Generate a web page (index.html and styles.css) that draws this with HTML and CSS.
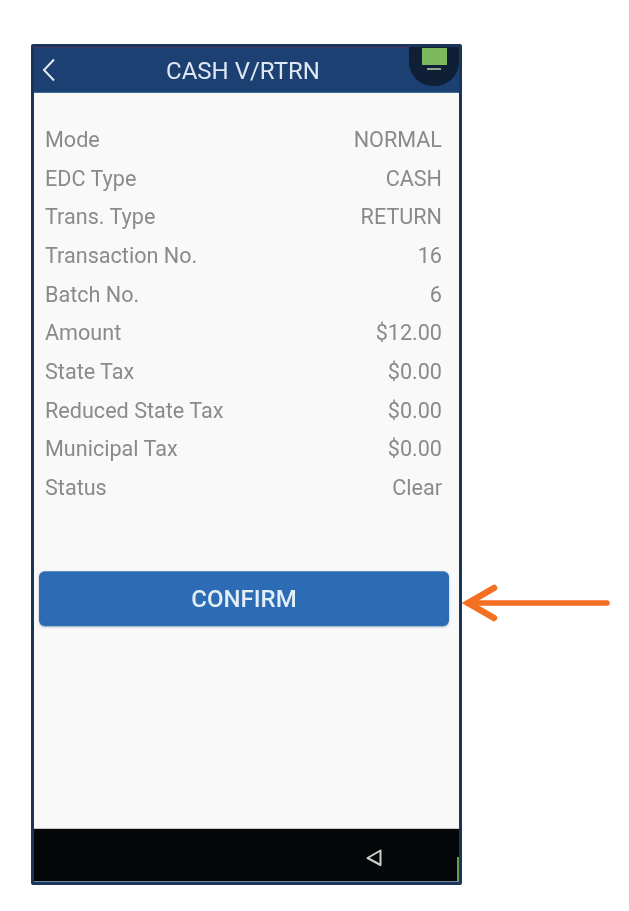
FILE: index.html
```html
<!DOCTYPE html>
<html lang="en">
<head>
    <meta charset="UTF-8">
    <meta name="viewport" content="width=device-width, initial-scale=1.0">
    <title>Cash V/Rtrn</title>
    <link rel="stylesheet" href="styles.css">
</head>
<body>
    <div class="phone">
        <!-- Header -->
        <div class="header">
            <svg class="back" width="16" height="26" viewBox="0 0 16 26">
                <path d="M13 2.5 L3 13 L13 23.5" fill="none" stroke="#e4ebf3" stroke-width="2"/>
            </svg>
            <span class="title">CASH V/RTRN</span>
            <div class="status-badge">
                <div class="status-light"></div>
                <div class="status-dash"></div>
            </div>
        </div>

        <!-- Details -->
        <div class="content">
            <div class="details">
                <div class="row"><span>Mode</span><span>NORMAL</span></div>
                <div class="row"><span>EDC Type</span><span>CASH</span></div>
                <div class="row"><span>Trans. Type</span><span>RETURN</span></div>
                <div class="row"><span>Transaction No.</span><span>16</span></div>
                <div class="row"><span>Batch No.</span><span>6</span></div>
                <div class="row"><span>Amount</span><span>$12.00</span></div>
                <div class="row"><span>State Tax</span><span>$0.00</span></div>
                <div class="row"><span>Reduced State Tax</span><span>$0.00</span></div>
                <div class="row"><span>Municipal Tax</span><span>$0.00</span></div>
                <div class="row"><span>Status</span><span>Clear</span></div>
            </div>
            <button class="btn-confirm" type="button">CONFIRM</button>
        </div>

        <!-- Nav bar -->
        <div class="navbar">
            <svg class="nav-back" width="18" height="20" viewBox="0 0 18 20">
                <path d="M15.5 2.5 V17 L2.5 10 Z" fill="none" stroke="#d0d0d0" stroke-width="2" stroke-linejoin="round"/>
            </svg>
            <div class="nav-edge"></div>
        </div>
    </div>

    <!-- Annotation arrow -->
    <svg class="arrow" width="150" height="40" viewBox="0 0 150 40">
        <path d="M6 20 H145" fill="none" stroke="#f36f21" stroke-width="5.5" stroke-linecap="round"/>
        <path d="M32 5 L6 20 L32 35" fill="none" stroke="#f36f21" stroke-width="6.5" stroke-linecap="round" stroke-linejoin="miter"/>
    </svg>
</body>
</html>
```

FILE: styles.css
```css
/* Page and device frame */
body {
    font-family: Roboto, "Liberation Sans", sans-serif;
    margin: 0;
    padding: 44px 0 0 31px;
    background-color: #fff;
    position: relative;
    height: 867px;
    overflow: hidden;
}
.phone {
    width: 431px;
    height: 841px;
    box-sizing: border-box;
    border: 3px solid #1a3558;
    border-radius: 2px;
    display: flex;
    flex-direction: column;
    background-color: #f9f9f9;
    filter: blur(0.6px);
}
.header {
    height: 46px;
    flex: none;
    display: flex;
    align-items: center;
    justify-content: center;
    position: relative;
    background-color: #1c4072;
    border-top: 1px solid #4a3560;
    border-bottom: 1px solid #3d6a96;
    box-sizing: border-box;
}
.title {
    color: #dfe8f2;
    font-size: 24px;
    margin-right: 7px;
    margin-top: 1px;
}
.back {
    position: absolute;
    left: 7px;
    top: 9px;
}
.status-badge {
    position: absolute;
    right: 0;
    top: -1px;
    width: 50px;
    height: 39px;
    background-color: #0f1f36;
    border-radius: 0 0 24px 24px;
    display: flex;
    flex-direction: column;
    align-items: center;
}
.status-light {
    width: 25px;
    height: 17px;
    margin-top: 1px;
    background-color: #7cb95c;
}
.status-dash {
    width: 14px;
    height: 2px;
    background-color: #8fa58a;
    margin-top: 3px;
}
.content {
    flex: 1;
    padding: 27px 4px 0;
}
.details {
    padding: 0 13px 0 7px;
}
.row {
    height: 38.7px;
    display: flex;
    justify-content: space-between;
    align-items: center;
    color: #8a8a8a;
    font-size: 21.6px;
}
.btn-confirm {
    display: block;
    width: 410px;
    height: 55px;
    margin: 64.5px 0 0 1px;
    background-color: #2b6cb4;
    color: #e4eef7;
    font-family: inherit;
    font-size: 24px;
    font-weight: 500;
    border: none;
    border-radius: 6px;
    border-top: 1px solid #5f8fc0;
    box-shadow: 0 1px 2px rgba(60, 110, 150, 0.6);
}
.navbar {
    height: 54px;
    flex: none;
    background-color: #040708;
    border-top: 1px solid #c9c9c9;
    border-bottom: 1px solid #6d8aa5;
    box-sizing: border-box;
    display: flex;
    justify-content: flex-end;
    align-items: center;
    padding: 6px 76px 0 0;
    position: relative;
}
.nav-edge {
    position: absolute;
    right: 0;
    bottom: 0;
    width: 2px;
    height: 24px;
    background-color: #5f9e5a;
}
/* Arrow sits beside the button, over the page */
.arrow {
    position: absolute;
    left: 462px;
    top: 583px;
}
```
